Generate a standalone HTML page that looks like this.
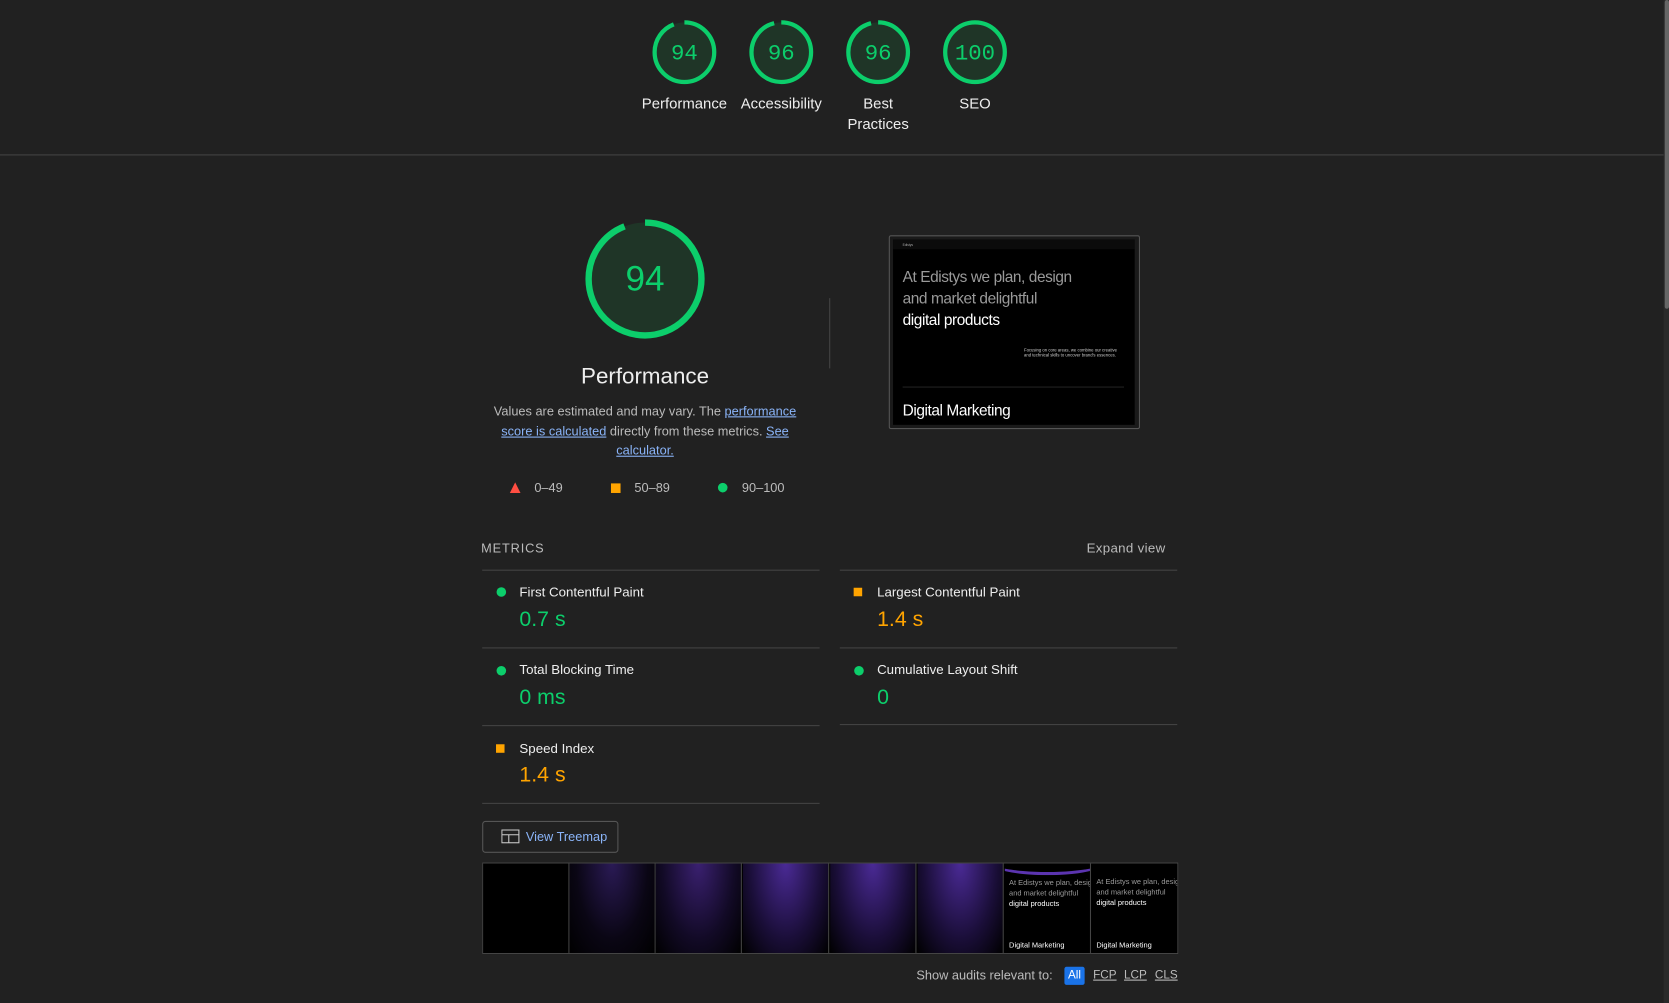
<!DOCTYPE html>
<html><head><meta charset="utf-8"><style>
html,body{margin:0;padding:0;background:#212121;overflow:hidden}
#w{position:absolute;left:0;top:0;width:1568px;height:942px;transform:scale(1.06441,1.06476);transform-origin:0 0;font-family:"Liberation Sans",sans-serif;color:#eee}
.a{position:absolute}
.lbl{position:absolute;font-size:14px;text-align:center;width:100px;line-height:19px;color:#eee}
a{color:#8ab4f8;text-decoration:underline}
.mt{position:absolute;font-size:12.5px;color:#eee}
.mv{position:absolute;font-size:20px}
.g{color:#0cce6b}.o{color:#ffa400}
.hl{position:absolute;height:1px;background:#444}
.frame{position:absolute;top:811px;height:84px;width:81px;border-right:1px solid #444;box-sizing:border-box}
</style></head><body><div id="w">
<svg class="a" style="left:0;top:0" width="1568" height="942">
 <g fill="#1f3527" stroke="#0cce6b" stroke-width="4">
  <circle cx="643" cy="49" r="28" stroke-dasharray="165.4 200" transform="rotate(-90 643 49)"/>
  <circle cx="734" cy="49" r="28" stroke-dasharray="168.9 200" transform="rotate(-90 734 49)"/>
  <circle cx="825" cy="49" r="28" stroke-dasharray="168.9 200" transform="rotate(-90 825 49)"/>
  <circle cx="916" cy="49" r="28" stroke-dasharray="200 200" transform="rotate(-90 916 49)"/>
  <circle cx="606" cy="262" r="53" stroke-width="6" stroke-dasharray="313 400" transform="rotate(-90 606 262)"/>
 </g>
 <g fill="#0cce6b" font-family="Liberation Mono,monospace" font-size="21" text-anchor="middle">
  <text x="643" y="56">94</text><text x="734" y="56">96</text><text x="825" y="56">96</text><text x="916" y="56">100</text>
  <text x="606" y="273" font-size="33" font-family="Liberation Sans,sans-serif">94</text>
 </g>
 <polygon points="484,453 489,463 479,463" fill="#ff4e42"/>
 <rect x="574" y="454" width="9" height="9" fill="#ffa400"/>
 <circle cx="679" cy="458" r="4.5" fill="#0cce6b"/>
 <circle cx="471" cy="556" r="4.5" fill="#0cce6b"/>
 <rect x="802" y="552" width="8" height="8" fill="#ffa400"/>
 <circle cx="471" cy="630" r="4.5" fill="#0cce6b"/>
 <circle cx="807" cy="630" r="4.5" fill="#0cce6b"/>
 <rect x="466" y="699" width="8" height="8" fill="#ffa400"/>
 <rect x="779" y="280" width="1" height="66" fill="#444"/>
 <rect x="1563" y="0" width="5" height="942" fill="#2a2a2a"/>
 <rect x="1564" y="0" width="4" height="290" fill="#666" rx="2"/>
</svg>
<div class="lbl" style="left:593px;top:88px">Performance</div>
<div class="lbl" style="left:684px;top:88px">Accessibility</div>
<div class="lbl" style="left:775px;top:88px">Best<br>Practices</div>
<div class="lbl" style="left:866px;top:88px">SEO</div>
<div class="hl" style="left:0;top:145px;width:1563px"></div>

<div class="a" style="left:456px;top:342px;width:300px;text-align:center;font-size:21px">Performance</div>
<div class="a" style="left:456px;top:377px;width:300px;text-align:center;font-size:12px;line-height:18.5px;color:#bbb">Values are estimated and may vary. The <a>performance score is calculated</a> directly from these metrics. <a>See calculator.</a></div>
<div class="a" style="left:502px;top:451px;font-size:12px;color:#bbb">0–49</div>
<div class="a" style="left:596px;top:451px;font-size:12px;color:#bbb">50–89</div>
<div class="a" style="left:697px;top:451px;font-size:12px;color:#bbb">90–100</div>

<div class="a" style="left:835px;top:221px;width:236px;height:182px;border:1px solid #555;border-radius:2px;box-sizing:border-box;background:#1a1a1a"></div>
<div class="a" style="left:839px;top:225px;width:227px;height:174px;background:#000;overflow:hidden;font-family:'Liberation Sans',sans-serif">
 <div class="a" style="left:0;top:0;width:227px;height:9px;background:#0b0b0b;font-size:3px;color:#aaa;padding:3px 9px;box-sizing:border-box">Edistys</div>
 <div class="a" style="left:9px;top:26px;font-size:14.5px;line-height:20px;color:#9a9a9a;letter-spacing:-0.4px;white-space:nowrap">At Edistys we plan, design<br>and market delightful<br><span style="color:#fff">digital products</span></div>
 <div class="a" style="left:123px;top:101px;font-size:4px;color:#ccc;width:95px;line-height:5px">Focusing on core areas, we combine our creative and technical skills to uncover brand's essences.</div>
 <div class="a" style="left:9px;top:138px;width:208px;height:1px;background:#222"></div>
 <div class="a" style="left:9px;top:153px;font-size:14.5px;color:#fff;letter-spacing:-0.4px">Digital Marketing</div>
</div>

<div class="a" style="left:452px;top:508px;font-size:12px;letter-spacing:0.8px;color:#bbb">METRICS</div>
<div class="a" style="left:1000px;top:508px;width:95px;text-align:right;font-size:12.5px;letter-spacing:0.3px;color:#bbb">Expand view</div>
<div class="hl" style="left:453px;top:535px;width:317px"></div>
<div class="hl" style="left:789px;top:535px;width:317px"></div>
<div class="hl" style="left:453px;top:608px;width:317px"></div>
<div class="hl" style="left:789px;top:608px;width:317px"></div>
<div class="hl" style="left:453px;top:681px;width:317px"></div>
<div class="hl" style="left:789px;top:680px;width:317px"></div>
<div class="hl" style="left:453px;top:754px;width:317px"></div>
<div class="mt" style="left:488px;top:549px">First Contentful Paint</div>
<div class="mv g" style="left:488px;top:571px">0.7 s</div>
<div class="mt" style="left:824px;top:549px">Largest Contentful Paint</div>
<div class="mv o" style="left:824px;top:571px">1.4 s</div>
<div class="mt" style="left:488px;top:622px">Total Blocking Time</div>
<div class="mv g" style="left:488px;top:644px">0 ms</div>
<div class="mt" style="left:824px;top:622px">Cumulative Layout Shift</div>
<div class="mv g" style="left:824px;top:644px">0</div>
<div class="mt" style="left:488px;top:696px">Speed Index</div>
<div class="mv o" style="left:488px;top:717px">1.4 s</div>

<div class="a" style="left:453px;top:771px;width:128px;height:30px;border:1px solid #555;border-radius:3px;box-sizing:border-box"></div>
<svg class="a" style="left:471px;top:779px" width="18" height="14"><rect x="0.5" y="0.5" width="16" height="12" fill="none" stroke="#ccc"/><line x1="0.5" y1="5" x2="16.5" y2="5" stroke="#ccc"/><line x1="7" y1="5" x2="7" y2="12.5" stroke="#ccc"/></svg>
<div class="a" style="left:494px;top:779px;font-size:12px;color:#8ab4f8">View Treemap</div>

<div class="a" style="left:453px;top:810px;width:654px;height:86px;border:1px solid #444;box-sizing:border-box;background:#000"></div>
<div class="frame" style="left:454px;background:#000"></div>
<div class="frame" style="left:535px;background:radial-gradient(ellipse at 50% 0%,#2a1a55 0%,#0a0614 60%,#000 100%)"></div>
<div class="frame" style="left:616px;background:radial-gradient(ellipse at 50% 0%,#3a2070 0%,#120a26 60%,#000 100%)"></div>
<div class="frame" style="left:698px;background:radial-gradient(ellipse at 50% 0%,#4a2a95 0%,#1a0e38 60%,#000 100%)"></div>
<div class="frame" style="left:780px;background:radial-gradient(ellipse at 50% 0%,#4a2a95 0%,#1a0e38 60%,#000 100%)"></div>
<div class="frame" style="left:862px;background:radial-gradient(ellipse at 50% 0%,#4a2a95 0%,#1a0e38 60%,#000 100%)"></div>
<div class="frame" style="left:944px;background:#000;overflow:hidden">
 <div class="a" style="left:-20px;top:-20px;width:120px;height:28px;border-bottom:3px solid #5b34b0;border-radius:50%"></div>
 <div class="a" style="left:4px;top:14px;font-size:7px;line-height:10px;color:#999;white-space:nowrap">At Edistys we plan, design<br>and market delightful<br><span style="color:#fff">digital products</span></div>
 <div class="a" style="left:4px;top:74px;font-size:7px;color:#fff">Digital Marketing</div>
</div>
<div class="frame" style="left:1026px;width:80px;border:none;background:#000;overflow:hidden">
 <div class="a" style="left:4px;top:13px;font-size:7px;line-height:10px;color:#999;white-space:nowrap">At Edistys we plan, design<br>and market delightful<br><span style="color:#fff">digital products</span></div>
 <div class="a" style="left:4px;top:74px;font-size:7px;color:#fff">Digital Marketing</div>
</div>

<div class="a" style="left:800px;top:909px;width:189px;text-align:right;font-size:12px;color:#bbb">Show audits relevant to:</div>
<div class="a" style="left:1000px;top:908px;width:19px;height:17px;background:#1a73e8;border-radius:2px;color:#fff;font-size:11px;text-align:center;line-height:17px">All</div>
<div class="a" style="left:1027px;top:910px;font-size:11px;color:#bbb;text-decoration:underline">FCP</div>
<div class="a" style="left:1056px;top:910px;font-size:11px;color:#bbb;text-decoration:underline">LCP</div>
<div class="a" style="left:1085px;top:910px;font-size:11px;color:#bbb;text-decoration:underline">CLS</div>
</div></body></html>
